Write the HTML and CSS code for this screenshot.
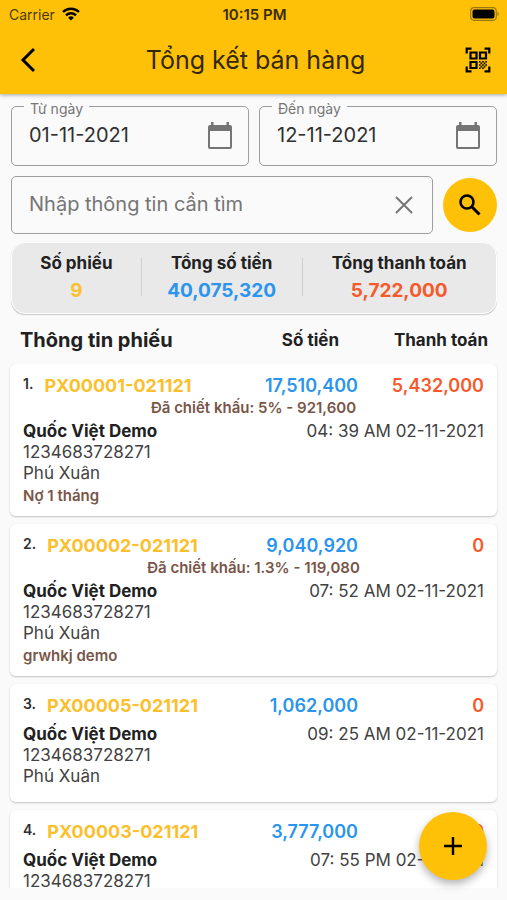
FILE: index.html
```html
<!DOCTYPE html>
<html lang="vi">
<head>
<meta charset="utf-8">
<meta name="viewport" content="width=device-width, initial-scale=1">
<title>Tổng kết bán hàng</title>
<link rel="stylesheet" href="styles.css">
</head>
<body>
<div class="app">
  <header class="header">
    <div class="status">
      <span class="status-carrier">Carrier
        <svg width="18" height="14" viewBox="0 0 18 14" fill="none" stroke="#000" stroke-width="2.4" aria-hidden="true"><path d="M1 5a11.500 11.500 0 0 1 16 0M4 8.300a7.200 7.200 0 0 1 10 0"/><path d="M9 13.500 6.100 10.700a4.200 4.200 0 0 1 5.800 0Z" fill="#000" stroke="none"/></svg>
      </span>
      <span class="status-time">10:15 PM</span>
      <span class="status-battery">
        <svg width="30" height="14" viewBox="0 0 30 14" aria-hidden="true"><rect x=".7" y=".7" width="25.600" height="12.600" rx="3.500" fill="none" stroke="#9b780f" stroke-width="1.200"/><rect x="2.500" y="2.500" width="22" height="9" rx="2" fill="#000"/><path d="M27.500 4.800q2.600 2.200 0 4.400z" fill="#9b780f"/></svg>
      </span>
    </div>
    <div class="toolbar">
      <button class="icon-btn" type="button" aria-label="Quay lại"><svg width="16" height="26" viewBox="0 0 16 26" fill="none" stroke="#000" stroke-width="3"><path d="M14 2 3 13l11 11"/></svg></button>
      <h1 class="title">Tổng kết bán hàng</h1>
      <button class="icon-btn icon-btn-end" type="button" aria-label="Quét mã QR"><svg width="26" height="26" viewBox="0 0 26 26" fill="none" stroke="#000" stroke-width="2.200"><path d="M1.700 6.500V1.700H6.500M19.500 1.700h4.800V6.500M1.700 19.500v4.800H6.500M19.500 24.300h4.800V19.500"/><path d="M5.500 5.500h6v6h-6zM15 5.500h6v6h-6zM5.500 15h6v6h-6z"/><path d="M14 14h1.600v1.600H14zM17.200 14h1.600v1.600h-1.600zM20.400 14H22v1.600h-1.600zM15.600 15.600h1.600v1.600h-1.600zM18.800 15.600h1.600v1.600h-1.600zM14 17.200h1.600v1.600H14zM17.200 17.200h1.600v1.600h-1.600zM20.400 17.200H22v1.600h-1.600zM15.600 18.800h1.600v1.600h-1.600zM18.800 18.800h1.600v1.600h-1.600zM14 20.400h1.600V22H14zM17.200 20.400h1.600V22h-1.600z" fill="#000" stroke="none"/></svg></button>
    </div>
  </header>

  <main class="content">
    <form class="filters">
      <div class="row">
        <div class="field">
          <label class="field-label" for="from">Từ ngày</label>
          <input class="field-input" id="from" type="text" value="01-11-2021">
          <svg class="calendar" width="26" height="28" viewBox="0 0 26 28" aria-hidden="true"><path d="M4 0h2.500v3h13V0H22v3h1a2 2 0 0 1 2 2v20a2 2 0 0 1-2 2H3a2 2 0 0 1-2-2V5a2 2 0 0 1 2-2h1zM3 9v16h20V9z" fill="#757575"/></svg>
        </div>
        <div class="field">
          <label class="field-label" for="to">Đến ngày</label>
          <input class="field-input" id="to" type="text" value="12-11-2021">
          <svg class="calendar" width="26" height="28" viewBox="0 0 26 28" aria-hidden="true"><path d="M4 0h2.500v3h13V0H22v3h1a2 2 0 0 1 2 2v20a2 2 0 0 1-2 2H3a2 2 0 0 1-2-2V5a2 2 0 0 1 2-2h1zM3 9v16h20V9z" fill="#757575"/></svg>
        </div>
      </div>
      <div class="row">
        <div class="field field-search">
          <input class="field-input" type="text" placeholder="Nhập thông tin cần tìm" aria-label="Nhập thông tin cần tìm">
          <button class="clear" type="button" aria-label="Xóa"><svg width="18" height="18" viewBox="0 0 18 18" stroke="#757575" stroke-width="2"><path d="m1 1 16 16M17 1 1 17"/></svg></button>
        </div>
        <button class="search-btn" type="submit" aria-label="Tìm kiếm"><svg width="22" height="22" viewBox="0 0 22 22" fill="none" stroke="#000"><circle cx="8" cy="8" r="6.500" stroke-width="2.600"/><path d="m13 13 7.500 7.500" stroke-width="3"/></svg></button>
      </div>
    </form>

    <section class="summary">
      <div class="stat stat-count"><span>Số phiếu</span><strong class="gold">9</strong></div>
      <div class="stat stat-total"><span>Tổng số tiền</span><strong class="blue">40,075,320</strong></div>
      <div class="stat stat-paid"><span>Tổng thanh toán</span><strong class="orange">5,722,000</strong></div>
    </section>

    <div class="columns">
      <h2 class="columns-title">Thông tin phiếu</h2>
      <span>Số tiền</span>
      <span>Thanh toán</span>
    </div>

    <div class="list">
      <article class="card">
        <div class="card-top"><span class="code"><small>1.</small><a href="#px1">PX00001-021121</a></span><strong class="blue">17,510,400</strong><strong class="orange">5,432,000</strong></div>
        <p class="discount">Đã chiết khấu: 5% - 921,600</p>
        <div class="customer"><strong>Quốc Việt Demo</strong><time>04: 39 AM 02-11-2021</time></div>
        <p>1234683728271</p>
        <p>Phú Xuân</p>
        <p class="note">Nợ 1 tháng</p>
      </article>
      <article class="card">
        <div class="card-top"><span class="code"><small>2.</small><a href="#px2">PX00002-021121</a></span><strong class="blue">9,040,920</strong><strong class="orange">0</strong></div>
        <p class="discount">Đã chiết khấu: 1.3% - 119,080</p>
        <div class="customer"><strong>Quốc Việt Demo</strong><time>07: 52 AM 02-11-2021</time></div>
        <p>1234683728271</p>
        <p>Phú Xuân</p>
        <p class="note">grwhkj demo</p>
      </article>
      <article class="card card-plain">
        <div class="card-top"><span class="code"><small>3.</small><a href="#px5">PX00005-021121</a></span><strong class="blue">1,062,000</strong><strong class="orange">0</strong></div>
        <div class="customer"><strong>Quốc Việt Demo</strong><time>09: 25 AM 02-11-2021</time></div>
        <p>1234683728271</p>
        <p>Phú Xuân</p>
      </article>
      <article class="card card-plain">
        <div class="card-top"><span class="code"><small>4.</small><a href="#px3">PX00003-021121</a></span><strong class="blue">3,777,000</strong><strong class="orange">0</strong></div>
        <div class="customer"><strong>Quốc Việt Demo</strong><time>07: 55 PM 02-11-2021</time></div>
        <p>1234683728271</p>
      </article>
    </div>
  </main>
  <button class="fab" type="button" aria-label="Thêm phiếu"><svg width="18" height="18" viewBox="0 0 18 18" stroke="#000" stroke-width="2.400"><path d="M9 0v18M0 9h18"/></svg></button>
</div>
</body>
</html>
```
FILE: styles.css
```css
* { box-sizing: border-box; }

body {
  margin: 0;
  background: #fafafa;
  color: #212121;
  font: 17px/21px Inter, "Noto Sans", sans-serif;
}

h1, h2, p { margin: 0; }

button {
  padding: 0;
  border: 0;
  background: none;
  cursor: pointer;
}

svg { display: block; flex: none; }

.app {
  position: relative;
  display: flex;
  flex-direction: column;
  height: 100vh;
}

.header {
  flex: none;
  background: #ffc107;
  box-shadow: 0 1px 4px rgba(0, 0, 0, .35);
}

.status {
  display: grid;
  grid-template-columns: 1fr auto 1fr;
  align-items: center;
  height: 28px;
  padding: 0 7px 0 9px;
  font-size: 14px;
}

.status-carrier { display: flex; align-items: center; gap: 7px; color: #4a3a08; }
.status-time { font-weight: 600; font-size: 15px; color: #3a2d08; }
.status-battery { justify-self: end; }

.toolbar {
  display: grid;
  grid-template-columns: 48px 1fr 48px;
  align-items: center;
  height: 66px;
  padding: 0 16px 2px 20px;
}

.icon-btn { justify-self: start; }
.icon-btn-end { justify-self: end; }

.title {
  font-size: 25px;
  line-height: 32px;
  font-weight: 400;
  text-align: center;
  color: #33280a;
}

.content {
  display: flex;
  flex-direction: column;
  flex: 1;
  min-height: 0;
  padding: 12px 10px;
}

.filters {
  display: flex;
  flex-direction: column;
  gap: 10px;
  padding: 0 0 0 1px;
}

.row { display: flex; align-items: center; gap: 10px; }

.field {
  position: relative;
  display: flex;
  flex: 1;
  align-items: center;
  min-width: 0;
  height: 60px;
  padding: 0 15px 0 17px;
  border: 1px solid #9e9e9e;
  border-radius: 5px;
}

.field-search { height: 58px; padding-right: 19px; }

.field-label {
  position: absolute;
  top: -7px;
  left: 12px;
  padding: 0 6px;
  background: #fafafa;
  color: #757575;
  font-size: 14px;
  line-height: 18px;
}

.field-input {
  flex: 1;
  min-width: 0;
  height: 40px;
  padding: 0 0 2px;
  border: 0;
  outline: 0;
  background: none;
  color: #303030;
  font: inherit;
  font-size: 20px;
}

.field-input::placeholder { color: #757575; opacity: 1; }

.search-btn {
  display: grid;
  place-items: center;
  width: 54px;
  height: 54px;
  border-radius: 50%;
  background: #ffc107;
}

.summary {
  display: flex;
  flex: none;
  align-items: center;
  height: 72px;
  margin: 8px 0 0 1px;
  padding-bottom: 2px;
  border: 1px solid #fff;
  border-radius: 14px;
  background: #e9e9e9;
  box-shadow: 0 1px 1px rgba(0, 0, 0, .2);
}

.stat {
  display: flex;
  flex-direction: column;
  gap: 6px;
  text-align: center;
  font-weight: 700;
}

.stat strong { font-size: 19px; font-weight: 700; }
.stat + .stat { background: linear-gradient(#cfcfcf, #cfcfcf) left center / 1px 38px no-repeat; }
.stat-count { flex: 129; }
.stat-total { flex: 162; }
.stat-paid { flex: 194; }

.gold { color: #fbc02d; }
.blue { color: #2b95ed; }
.orange { color: #f65a2c; }

.columns {
  display: grid;
  grid-template-columns: 1fr auto 149px;
  align-items: center;
  height: 50px;
  padding: 2px 9px 0 10px;
  font-weight: 700;
  text-align: right;
}

.columns-title {
  font-size: 20px;
  font-weight: 700;
  text-align: left;
}

.list {
  display: flex;
  flex-direction: column;
  flex: 1;
  gap: 8px;
  min-height: 0;
  margin: 0 -2px;
  padding: 0 2px;
  overflow-y: auto;
  scrollbar-width: none;
}

.card {
  flex: none;
  padding: 11px 13px 10px;
  border-radius: 6px;
  background: #fff;
  box-shadow: 0 1px 2px rgba(0, 0, 0, .22);
  color: #424242;
}

.card-plain { padding-bottom: 15px; }

.card-top {
  display: grid;
  grid-template-columns: 1fr auto 126px;
  line-height: 22px;
  text-align: right;
  font-size: 18px;
}

.card-top strong { font-weight: 600; }
.code { display: flex; gap: 11px; font-weight: 700; text-align: left; }
.code small { color: #303030; font-size: 14px; font-weight: 600; line-height: 18px; }
.code a { color: #fbc02d; text-decoration: none; }

.discount, .note {
  color: #795548;
  font-size: 15px;
  font-weight: 600;
}

.discount { margin-bottom: 2px; line-height: 22px; text-align: center; }
.note { margin-top: 1px; }

.customer { display: flex; justify-content: space-between; }
.customer strong { color: #212121; font-weight: 700; }
.card-plain .customer { margin-top: 7px; }

.fab {
  position: absolute;
  right: 20px;
  bottom: 20px;
  display: grid;
  place-items: center;
  width: 68px;
  height: 68px;
  border-radius: 50%;
  background: #ffc107;
  box-shadow: 0 4px 9px rgba(0, 0, 0, .3);
}
```
